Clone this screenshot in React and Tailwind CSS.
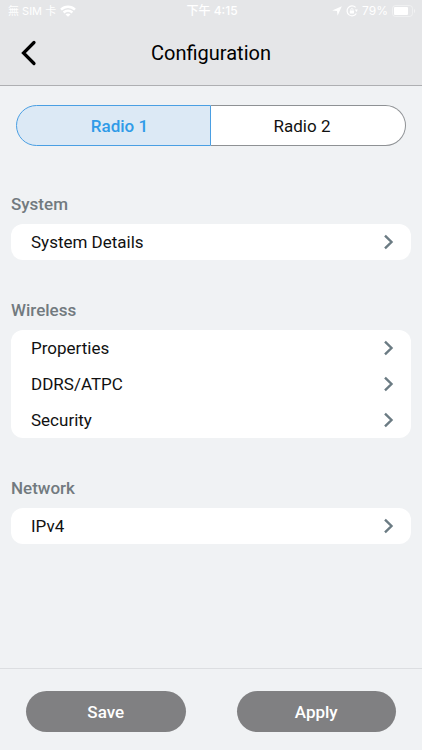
import React, { useState } from "react";

const sections = [
  { title: "System", items: ["System Details"] },
  { title: "Wireless", items: ["Properties", "DDRS/ATPC", "Security"] },
  { title: "Network", items: ["IPv4"] },
];

const StatusBar = () => (
  <div className="flex h-[22px] items-center justify-between pl-2 pr-[6px] text-xs text-white font-[Inter,'Noto_Sans_CJK_TC',sans-serif]">
    <div className="flex flex-1 items-center gap-1">
      <span className="text-[11px]">無 SIM 卡</span>
      <svg width="16" height="12" viewBox="0 0 16 12" fill="none" stroke="currentColor" strokeWidth="2.400">
        <path d="M1 4.600C5 .700 11 .700 15 4.600" />
        <path d="M3.600 7.500c2.500-2.300 6.300-2.300 8.800 0" />
        <path d="M8 11.800 5.500 9.400c1.400-1.300 3.600-1.300 5 0z" fill="currentColor" stroke="none" />
      </svg>
    </div>
    <span className="font-medium">下午 4:15</span>
    <div className="flex flex-1 items-center justify-end gap-1">
      <svg width="10" height="10" viewBox="0 0 10 10" fill="currentColor">
        <path d="M9.8.2 5.6 9.8 5 5 .2 4.4z" />
      </svg>
      <svg width="12" height="12" viewBox="0 0 12 12" fill="none" stroke="currentColor">
        <path d="M9.6 2.3A5 5 0 1 0 10.3 8.500" strokeWidth="1.200" />
        <path d="M8.8 4.6h3L10.6 7z" fill="currentColor" stroke="none" />
        <rect x="3.8" y="5.4" width="4.2" height="3.2" rx=".5" fill="currentColor" stroke="none" />
        <path d="M4.7 5.6v-.8a1.2 1.2 0 0 1 2.4 0v.8" strokeWidth=".8" />
      </svg>
      <span>79%</span>
      <svg width="24" height="12" viewBox="0 0 24 12">
        <rect x=".5" y=".5" width="20" height="11" rx="3" fill="none" stroke="#fff" strokeOpacity=".4" />
        <rect x="2" y="2" width="14" height="8" rx="1" fill="#fff" />
        <path d="M22 4v4c1.6-.7 1.6-3.3 0-4z" fill="#fff" fillOpacity=".5" />
      </svg>
    </div>
  </div>
);

const Row = ({ label }) => (
  <li>
    <button type="button" className="flex h-9 w-full items-center justify-between pl-5 pr-4 text-left">
      {label}
      <svg width="12" height="16" viewBox="0 0 12 16" fill="none" stroke="#6b7b83" strokeWidth="2.400">
        <path d="M2 1.600 8.500 8 2 14.400" />
      </svg>
    </button>
  </li>
);

const App = () => {
  const [radio, setRadio] = useState(1);

  return (
    <div className="flex min-h-screen flex-col bg-[#f0f2f4] text-[17px] leading-6 text-[#111] font-[Roboto,sans-serif]">
      <header className="border-b border-[#aeafb2] bg-[#e5e6e8]">
        <StatusBar />
        <div className="grid h-[63px] grid-cols-[56px_1fr_56px] items-center pb-[2px]">
          <button type="button" aria-label="Back" className="flex h-full items-center pl-5">
            <svg width="18" height="26" viewBox="0 0 18 26" fill="none" stroke="#000" strokeWidth="3.200" strokeLinecap="round">
              <path d="M14 2.500 3.500 13 14 23.500" />
            </svg>
          </button>
          <h1 className="text-center text-xl text-black">Configuration</h1>
        </div>
      </header>

      <main className="flex-1">
        <div className="mx-4 mt-[19px] grid h-[41px] grid-cols-2">
          <button
            type="button"
            aria-pressed={radio === 1}
            onClick={() => setRadio(1)}
            className={
              "rounded-l-full border pl-3 " +
              (radio === 1
                ? "border-[#4a9fe3] bg-[#dce9f5] font-medium text-[#2f9be8]"
                : "border-r-0 border-[#8e9194] bg-white")
            }
          >
            Radio 1
          </button>
          <button
            type="button"
            aria-pressed={radio === 2}
            onClick={() => setRadio(2)}
            className={
              "rounded-r-full border pr-3 " +
              (radio === 2
                ? "border-[#4a9fe3] bg-[#dce9f5] font-medium text-[#2f9be8]"
                : "border-l-0 border-[#8e9194] bg-white")
            }
          >
            Radio 2
          </button>
        </div>

        <div className="mt-[46px] flex flex-col gap-[38px] px-[11px]">
          {sections.map((section) => (
            <section key={section.title}>
              <h2 className="mb-2 font-medium text-[#727a7f]">{section.title}</h2>
              <ul className="rounded-xl bg-white">
                {section.items.map((item) => (
                  <Row key={item} label={item} />
                ))}
              </ul>
            </section>
          ))}
        </div>
      </main>

      <footer className="grid grid-cols-2 gap-[51px] border-t border-[#dcdee1] px-[26px] pt-[22px] pb-[18px] font-medium text-white">
        <button type="button" className="h-[41px] rounded-full bg-[#808082]">Save</button>
        <button type="button" className="h-[41px] rounded-full bg-[#808082]">Apply</button>
      </footer>
    </div>
  );
};

export default App;
